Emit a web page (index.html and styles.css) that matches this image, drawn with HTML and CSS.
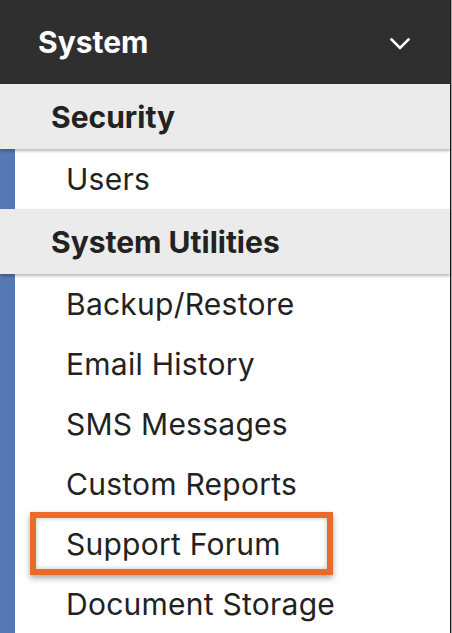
FILE: index.html
```html
<!DOCTYPE html>
<html>
<head>
<meta charset="utf-8">
<link rel="stylesheet" href="styles.css">
</head>
<body>
<div class="panel">
  <div class="top">
    <span class="top-title">System</span>
    <svg class="chevron" width="20" height="12" viewBox="0 0 20 12"><path d="M1.5 1.5 L10 10 L18.5 1.5" fill="none" stroke="#fff" stroke-width="2.6" stroke-linecap="square"/></svg>
  </div>
  <div class="section">Security</div>
  <div class="items">
    <div class="item">Users</div>
  </div>
  <div class="section">System Utilities</div>
  <div class="items">
    <div class="item">Backup/Restore</div>
    <div class="item">Email History</div>
    <div class="item">SMS Messages</div>
    <div class="item">Custom Reports</div>
    <div class="item highlighted">Support Forum<span class="callout"></span></div>
    <div class="item">Document Storage</div>
  </div>
</div>
</body>
</html>
```
FILE: styles.css
```css
html, body {
  margin: 0;
  padding: 0;
  background: #ffffff;
  overflow: hidden;
}
.panel {
  width: 450px;
  height: 633px;
  border-right: 1px solid #1a1a1a;
  box-shadow: 1px 0 0 #a8a8a8;
  font-family: Inter, "Noto Sans", sans-serif;
  color: #222222;
  background: #ffffff;
}
.top {
  height: 84px;
  background: #2f2f2f;
  display: flex;
  align-items: center;
  justify-content: space-between;
  padding: 0 40px 0 38px;
}
.top-title {
  color: #ffffff;
  font-weight: 700;
  font-size: 30px;
  line-height: 1;
}
.chevron {
  display: block;
  margin-top: 3px;
}
.section {
  height: 65px;
  background: #ebebeb;
  display: flex;
  align-items: center;
  padding-left: 51px;
  font-weight: 700;
  font-size: 30px;
  position: relative;
  z-index: 1;
  box-shadow: 0 2px 3px rgba(0, 0, 0, 0.28);
}
.items {
  border-left: 15px solid #5679b5;
}
.item {
  height: 60px;
  display: flex;
  align-items: center;
  padding-left: 51px;
  font-size: 30px;
  letter-spacing: 0.25px;
  position: relative;
}
.callout {
  position: absolute;
  left: 15px;
  top: -2px;
  width: 291px;
  height: 51px;
  border: 6px solid #e96b27;
  box-shadow: 0 3px 6px rgba(0, 0, 0, 0.35), inset 0 0 5px rgba(0, 0, 0, 0.25);
}
```
